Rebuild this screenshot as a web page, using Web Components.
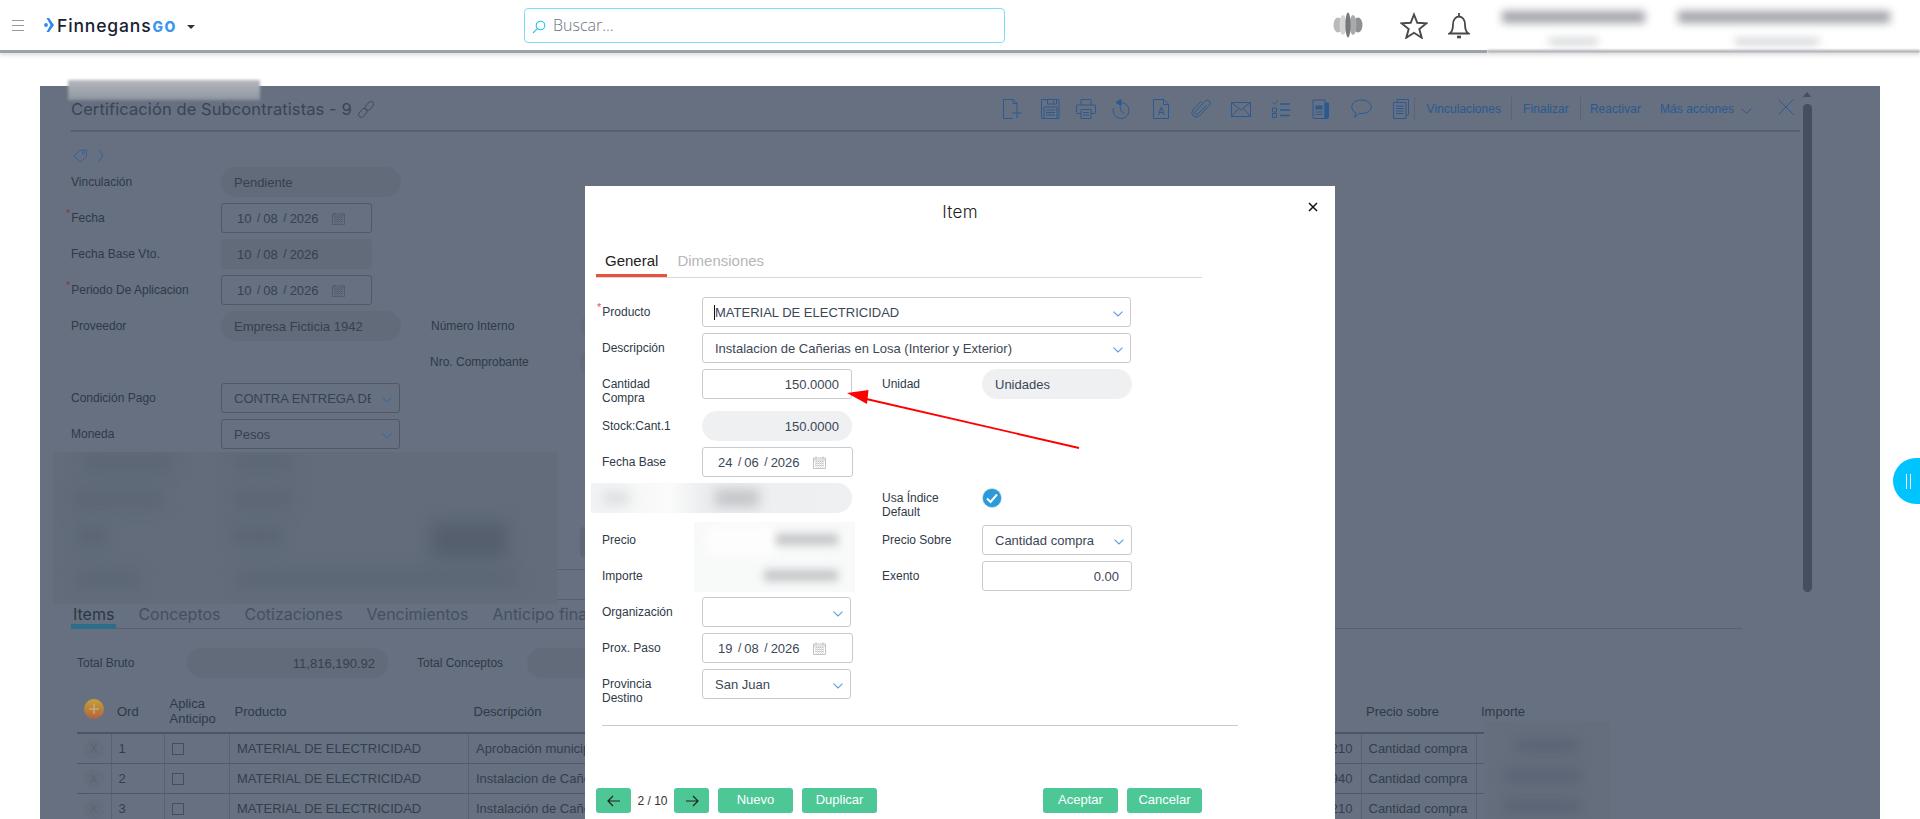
<!DOCTYPE html>
<html lang="es">
<head>
<meta charset="utf-8">
<title>Finnegans GO</title>
<style>
html, body { margin: 0; height: 100%; overflow: hidden; background: #fff; font-family: "Liberation Sans", Arial, sans-serif; }
</style>
</head>
<body>
<fin-app>
  <fin-topbar></fin-topbar>
  <fin-panel>
    <fin-header></fin-header>
    <fin-tagline></fin-tagline>

    <fin-line><fin-row col label="Vinculación"><fin-field kind="ro" value="Pendiente" style="width:180px"></fin-field></fin-row></fin-line>
    <fin-line><fin-row col req label="Fecha"><fin-field kind="date" value="10/08/2026" style="width:151px"></fin-field></fin-row></fin-line>
    <fin-line><fin-row col label="Fecha Base Vto."><fin-field kind="date" flat value="10/08/2026" style="width:151px"></fin-field></fin-row></fin-line>
    <fin-line><fin-row col req label="Periodo De Aplicacion"><fin-field kind="date" value="10/08/2026" style="width:151px"></fin-field></fin-row></fin-line>
    <fin-line>
      <fin-row col label="Proveedor"><fin-field kind="ro" value="Empresa Ficticia 1942" style="width:180px"></fin-field></fin-row>
      <fin-row label="Número Interno"><fin-field kind="ro" style="width:180px"></fin-field></fin-row>
    </fin-line>
    <fin-line>
      <fin-row col></fin-row>
      <fin-row label="Nro. Comprobante" style="margin-left:-1px"><fin-field kind="ro" style="width:180px"></fin-field></fin-row>
    </fin-line>
    <fin-line><fin-row col label="Condición Pago"><fin-field kind="select" value="CONTRA ENTREGA DE" style="width:179px"></fin-field></fin-row></fin-line>
    <fin-line><fin-row col label="Moneda"><fin-field kind="select" value="Pesos" style="width:179px"></fin-field></fin-row></fin-line>

    <fin-tabs style="margin-top:152px;width:1671px;--tabs-h:28px;--tab-h:28px;--tab-top:3px;--tab-bar-h:5px;--tab-pad:2px;--tab-gap:20px;--tab-bar:#2b6d8b;--tab-line:#556071;--tab-on:#2c3645;--tab-off:#454f5f;--tab-font:'Inter','Open Sans',sans-serif;--tab-size:16px">
      <fin-tab active>Items</fin-tab><fin-tab>Conceptos</fin-tab><fin-tab>Cotizaciones</fin-tab><fin-tab>Vencimientos</fin-tab><fin-tab>Anticipo fina</fin-tab>
    </fin-tabs>

    <fin-line style="margin:19px 0 12px 6px;--label-w:110px;--col-w:340px;--label-pad:0px">
      <fin-row col label="Total Bruto"><fin-field kind="ro" align="right" value="11,816,190.92" style="width:201px"></fin-field></fin-row>
      <fin-row label="Total Conceptos"><fin-field kind="ro" align="right" style="width:201px"></fin-field></fin-row>
    </fin-line>
    <fin-items></fin-items>
  </fin-panel>

  <!-- tapados en la captura original -->
  <fin-blur style="left:68px;top:80px;width:192px;height:20px;--fill:linear-gradient(#b4b7bd,#8f95a0);filter:blur(1.500px)"></fin-blur>
  <fin-blur style="left:53px;top:452px;width:504px;height:152px;--fill:#626c7b;--blob:#5a6473;--b:8px">
    <span style="left:30px;top:4px;width:90px;height:14px"></span>
    <span style="left:180px;top:4px;width:60px;height:12px"></span>
    <span style="left:20px;top:40px;width:90px;height:14px"></span>
    <span style="left:180px;top:40px;width:60px;height:14px"></span>
    <span style="left:24px;top:76px;width:30px;height:16px"></span>
    <span style="left:180px;top:76px;width:50px;height:16px"></span>
    <span style="left:378px;top:70px;width:76px;height:36px;background:#555f6e"></span>
    <span style="left:24px;top:120px;width:62px;height:12px"></span>
    <span style="left:184px;top:120px;width:280px;height:12px"></span>
  </fin-blur>
  <fin-blur style="left:557px;top:569px;width:28px;height:29px;--fill:transparent;border-top:1px solid #566070;border-bottom:1px solid #566070"></fin-blur>
  <fin-blur style="left:580px;top:527px;width:5px;height:30px;--fill:#5d6775;border-radius:4px 0 0 4px"></fin-blur>
  <fin-blur style="left:1484px;top:722px;width:126px;height:97px;--fill:#646e7d;--blob:#596373">
    <span style="left:32px;top:18px;width:62px;height:12px"></span>
    <span style="left:20px;top:48px;width:76px;height:12px"></span>
    <span style="left:20px;top:78px;width:76px;height:12px"></span>
  </fin-blur>

  <fin-modal>
    <fin-line><fin-row col req label="Producto"><fin-field kind="select" caret value="MATERIAL DE ELECTRICIDAD" style="width:429px"></fin-field></fin-row></fin-line>
    <fin-line><fin-row col label="Descripción"><fin-field kind="select" value="Instalacion de Cañerias en Losa (Interior y Exterior)" style="width:429px"></fin-field></fin-row></fin-line>
    <fin-line>
      <fin-row col label="Cantidad Compra"><fin-field align="right" value="150.0000" style="width:150px"></fin-field></fin-row>
      <fin-row label="Unidad"><fin-field kind="ro" value="Unidades" style="width:150px"></fin-field></fin-row>
    </fin-line>
    <fin-line><fin-row col label="Stock:Cant.1"><fin-field kind="ro" align="right" value="150.0000" style="width:150px"></fin-field></fin-row></fin-line>
    <fin-line><fin-row col label="Fecha Base"><fin-field kind="date" value="24/06/2026" style="width:151px"></fin-field></fin-row></fin-line>
    <fin-line>
      <fin-row col></fin-row>
      <fin-row label="Usa Índice Default"><fin-check></fin-check></fin-row>
    </fin-line>
    <fin-line>
      <fin-row col label="Precio"></fin-row>
      <fin-row label="Precio Sobre"><fin-field kind="select" value="Cantidad compra" style="width:150px"></fin-field></fin-row>
    </fin-line>
    <fin-line>
      <fin-row col label="Importe"></fin-row>
      <fin-row label="Exento"><fin-field align="right" value="0.00" style="width:150px"></fin-field></fin-row>
    </fin-line>
    <fin-line><fin-row col label="Organización"><fin-field kind="select" style="width:149px"></fin-field></fin-row></fin-line>
    <fin-line><fin-row col label="Prox. Paso"><fin-field kind="date" value="19/08/2026" style="width:151px"></fin-field></fin-row></fin-line>
    <fin-line><fin-row col label="Provincia Destino"><fin-field kind="select" value="San Juan" style="width:149px"></fin-field></fin-row></fin-line>
  </fin-modal>

  <fin-blur style="left:591px;top:483px;width:261px;height:30px;--fill:linear-gradient(90deg,#f2f3f4,#fbfbfb 30%,#eceef0 42%,#eef0f1);--blob:#c4c6c9;--b:6px;border-radius:0 15px 15px 0">
    <span style="left:124px;top:6px;width:44px;height:18px"></span>
    <span style="left:12px;top:8px;width:26px;height:14px;background:#dcdee0"></span>
  </fin-blur>
  <fin-blur style="left:694px;top:522px;width:161px;height:70px;--fill:#f8f9f9;--blob:#c2c4c7;--b:4px">
    <span style="left:12px;top:4px;width:70px;height:30px;background:#fdfdfd"></span>
    <span style="left:82px;top:12px;width:62px;height:11px"></span>
    <span style="left:70px;top:48px;width:74px;height:11px"></span>
  </fin-blur>

  <fin-arrow></fin-arrow>
  <fin-float></fin-float>
</fin-app>

<script>
//! Helper: every element clones its template into an open shadow root
function makeTemplate(html) {
    const t = document.createElement('template');
    t.innerHTML = html;
    return t;
}

class Base extends HTMLElement {
    constructor() {
        super();
        this.attachShadow({ mode: 'open' });
        this.shadowRoot.appendChild(this.constructor.template.content.cloneNode(true));
    }
}

//! APP
class FinApp extends Base {
    static template = makeTemplate(`
<style>
:host { display: block; position: relative; width: 100%; height: 100vh; overflow: hidden; background: #fff; }
</style>
<slot></slot>`);
}

//! TOP BAR
class FinTopbar extends Base {
    static template = makeTemplate(`
<style>
:host { display: flex; align-items: center; position: relative; box-sizing: content-box; height: 50px; background: #fff; border-bottom: 3px solid #9da1a8; box-shadow: 0 2px 4px rgba(0,0,0,.14); }
.burger { margin-left: 12px; width: 12px; height: 9px; border-top: 1px solid #999; border-bottom: 1px solid #999; position: relative; }
.burger::after { content: ""; position: absolute; left: 0; right: 0; top: 4px; border-top: 1px solid #999; }
.logo { display: flex; align-items: center; margin-left: 20px; width: 143px; }
.logo svg { margin-right: 3px; }
.name { font: 500 17.500px "Inter", sans-serif; color: #182232; letter-spacing: .85px; }
.go { font: 800 14px "Inter", sans-serif; color: #3a95f0; letter-spacing: 1.600px; margin-left: 1px; margin-top: 2px; }
.caret { flex: none; width: 0; height: 0; border: 4px solid transparent; border-top: 4px solid #333; border-bottom: 0; margin-top: 3px; }
.search { margin-left: 329px; box-sizing: border-box; width: 481px; height: 35px; border: 1px solid #7fdcf8; border-radius: 4px; display: flex; align-items: center; padding-left: 7px; font: 300 16px "Open Sans", sans-serif; color: #6b7280; }
.search svg { margin-right: 7px; margin-top: 3px; }
.brand { margin-left: 328px; }
.star { margin-left: 37px; }
.bell { margin-left: 20px; }
.who { position: absolute; left: 1487px; top: 0; right: 0; height: 53px; background: #fff; overflow: hidden; }
.who i { position: absolute; background: #a2a4a9; filter: blur(4px); }
.who b { position: absolute; left: 0; right: 0; top: 50px; height: 3px; background: #a9acb2; filter: blur(1px); }
</style>
<div class="burger"></div>
<div class="logo">
  <svg width="10" height="14" viewBox="0 0 10 14"><path d="M2.500 0H5l5 7-5 7H2.500L6.500 7z" fill="#2f86ee"/><circle cx="2" cy="7" r="1.900" fill="#2f86ee"/></svg>
  <span class="name">Finnegans</span><span class="go">GO</span>
</div>
<div class="caret"></div>
<div class="search">
  <svg width="14" height="14" viewBox="0 0 14 14" fill="none" stroke="#27c3ee" stroke-width="1.100"><circle cx="8.500" cy="5.500" r="4.300"/><path d="M5.300 8.700 1 13"/></svg>
  <span>Buscar...</span>
</div>
<svg class="brand" width="30" height="26" viewBox="0 0 30 26">
  <ellipse cx="5" cy="13" rx="4.500" ry="7.500" fill="#b9babc"/><ellipse cx="25" cy="13" rx="4.500" ry="7.500" fill="#8f9092"/>
  <ellipse cx="10" cy="13" rx="3.500" ry="10" fill="#d3d4d5"/><ellipse cx="20" cy="13" rx="3.500" ry="10" fill="#a8a9ab"/>
  <ellipse cx="15" cy="13" rx="2.600" ry="12.500" fill="#77787a"/>
</svg>
<svg class="star" width="28" height="27" viewBox="0 0 28 27"><path d="M14 2.500l3.300 8.300 9.200.5-7.200 5.700 2.400 8.700L14 20.800 6.300 25.700l2.400-8.700L1.500 11.300l9.200-.5z" fill="none" stroke="#484848" stroke-width="1.900" stroke-linejoin="miter"/></svg>
<svg class="bell" width="22" height="27" viewBox="0 0 22 27" fill="none" stroke="#484848" stroke-width="1.800"><path d="M1.500 21.500h19c-2.500-1.500-3.500-4-3.500-9 0-4.500-2.500-8-6-8s-6 3.500-6 8c0 5-1 7.500-3.500 9z"/><path d="M11 1v3.500"/><path d="M9 25h4" stroke-width="2.600"/></svg>
<div class="who">
  <i style="left:15px;top:11px;width:143px;height:12px"></i>
  <i style="left:191px;top:11px;width:212px;height:12px"></i>
  <i style="left:62px;top:39px;width:49px;height:5px;background:#c2c4c7"></i>
  <i style="left:248px;top:39px;width:84px;height:5px;background:#c2c4c7"></i>
  <b></b>
</div>`);
}

//! BACKGROUND PANEL (dimmed by the modal overlay)
class FinPanel extends Base {
    static template = makeTemplate(`
<style>
:host { display: block; position: relative; box-sizing: border-box; margin: 33px 40px 0; height: 733px; padding-left: 31px; background: #667080; overflow: hidden;
    --label-w: 150px; --col-w: 360px; --label-color: #2f3947; --star: #8f3346; --field-border: #4f5867; --field-color: #364050; --field-fill: #616b79; --chev: #3f6a9c; --cal: #4f5867; }
.scroll { position: absolute; left: 1763px; top: 18px; width: 9px; height: 488px; border-radius: 5px; background: #444e5d; }
.up { position: absolute; left: 1763px; top: 6px; width: 0; height: 0; border: 4px solid transparent; border-bottom: 5px solid #444e5d; border-top: 0; }
</style>
<slot></slot>
<div class="up"></div>
<div class="scroll"></div>`);
}

//! Toolbar with title of the document
class FinHeader extends Base {
    static template = makeTemplate(`
<style>
:host { display: flex; align-items: center; box-sizing: border-box; width: 1729px; height: 46px; padding-top: 2px; border-bottom: 2px solid #565f6e; color: #2a5a90; }
.title { font: 400 16.500px "Inter", sans-serif; color: #3a4453; letter-spacing: .09px; margin-right: 6px; }
.link { margin-right: auto; }
.ic { display: flex; justify-content: center; align-items: center; height: 22px; }
svg.t { display: block; }
.act { font: 12px "Liberation Sans", sans-serif; color: #2a5a90; white-space: nowrap; letter-spacing: .05px; }
.sep { width: 1px; height: 24px; background: #5a6473; }
.x { margin: 0 6px 4px 26px; }
</style>
<span class="title">Certificación de Subcontratistas - 9</span>
<svg class="link" width="16" height="17" viewBox="0 0 16 17" fill="none" stroke="#3f4958" stroke-width=".9"><rect x="8.500" y="-.5" width="5.500" height="10" rx="2.700" transform="rotate(40 11 5)"/><rect x="2" y="7" width="5.500" height="10" rx="2.700" transform="rotate(40 4.800 12)"/></svg>

<div class="ic" style="width:38px"><svg class="t" width="19" height="20" viewBox="0 0 19 20" fill="none" stroke="currentColor"><path d="M10 19.500H.500V.500H10l4 4V9M10 .500v4h4M14 9v10M9 14h9.500"/></svg></div>
<div class="ic" style="width:38px"><svg class="t" width="19" height="20" viewBox="0 0 19 20" fill="none" stroke="currentColor"><path d="M.5.500h17.500v19H.500zM6.500.500V5h9V.500M12.500 1.500V4M3 8h13v11.500H3zM5 11h9M5 13.500h9M5 16h9"/></svg></div>
<div class="ic" style="width:33px"><svg class="t" width="20" height="20" viewBox="0 0 20 20" fill="none" stroke="currentColor"><path d="M5 6V.500h10V6M5 14.500H1.500a1 1 0 0 1-1-1V7a1 1 0 0 1 1-1h17a1 1 0 0 1 1 1v6.500a1 1 0 0 1-1 1H15M5 10.500h10v9H5zM7 13.500h6M7 16h6"/></svg></div>
<div class="ic" style="width:38px"><svg class="t" width="20" height="20" viewBox="0 0 20 20" fill="none" stroke="currentColor"><path d="M7 3.800a8 8 0 1 1-5.500 5"/><path d="M9 .5 4 3.500 9 6.500z" fill="currentColor"/><path d="M8 7.500l1 4 3.500 3.500"/></svg></div>
<div class="ic" style="width:40px"><svg class="t" width="16" height="20" viewBox="0 0 16 20" fill="none" stroke="currentColor"><path d="M.5.500H11l4.500 4.500v14.500H.500zM10.500.500v5h5"/><text x="8" y="16" text-anchor="middle" font-family="Liberation Sans" font-size="10" fill="currentColor" stroke="none">A</text></svg></div>
<div class="ic" style="width:41px"><svg class="t" width="20" height="20" viewBox="0 0 20 20" fill="none" stroke="currentColor"><path d="M15.500 6 7 15a1.800 1.800 0 0 1-2.700-2.600L14 2.200a3 3 0 0 1 4.300 4.200L8 17.300a4.500 4.500 0 0 1-6.300-6.200L10.500 2"/></svg></div>
<div class="ic" style="width:38px"><svg class="t" width="20" height="15" viewBox="0 0 20 15" fill="none" stroke="currentColor"><path d="M.5.500h19v14H.500zM.5.500 10 8l9.500-7.500M.5 14.500 7.500 6.500M19.500 14.500l-7-8"/></svg></div>
<div class="ic" style="width:42px"><svg class="t" width="18" height="18" viewBox="0 0 18 18" fill="none" stroke="currentColor"><path d="M.5 2.500l2 2L6 .5M.5 8h4v4h-4zM.5 13.500h4v4h-4z"/><path d="M8 4h10M8 10h10M8 15.500h10" stroke-width="1.600"/></svg></div>
<div class="ic" style="width:38px"><svg class="t" width="17" height="20" viewBox="0 0 17 20" fill="none" stroke="currentColor"><path d="M13 4h3.500v14.500a1 1 0 0 1-1 1H13z" fill="currentColor"/><path d="M1 1h12v18.500H2a1 1 0 0 1-1-1z"/><path d="M3.500 6.500h7v4h-7z" fill="currentColor" stroke="none"/><path d="M3.500 13h7M3.500 15.500h7"/></svg></div>
<div class="ic" style="width:44px"><svg class="t" width="21" height="20" viewBox="0 0 21 20" fill="none" stroke="currentColor"><path d="M10.500 1C5 1 .8 4 .8 8c0 2.500 1.500 4.500 4 5.700L3.500 18.500l5-4.200c.6.100 1.300.200 2 .200 5.500 0 9.700-3 9.700-6.500S16 1 10.500 1z"/></svg></div>
<div class="ic" style="width:34px;margin-right:-4px"><svg class="t" width="16" height="20" viewBox="0 0 16 20" fill="none" stroke="currentColor"><path d="M4 3V.500h11.500V16H13"/><path d="M.5 3.500H13V19.500H.500zM3 7h7.500M3 9.500h7.500M3 12h7.500M3 14.500h7.500"/></svg></div>

<div class="sep"></div><span class="act" style="margin:0 10px 0 12px">Vinculaciones</span>
<div class="sep"></div><span class="act" style="margin:0 11px">Finalizar</span>
<div class="sep"></div><span class="act" style="margin:0 19px 0 9px">Reactivar</span>
<span class="act">Más acciones</span>
<svg style="margin-left:7px;margin-top:3px" width="11" height="6" viewBox="0 0 11 6" fill="none" stroke="currentColor"><path d="M.5.500l5 5 5-5"/></svg>
<svg class="x" width="16" height="16" viewBox="0 0 16 16" fill="none" stroke="currentColor"><path d="M.5.500l15 15M15.500.500l-15 15"/></svg>`);
}

class FinTagline extends Base {
    static template = makeTemplate(`
<style>
:host { display: flex; align-items: center; gap: 10px; height: 35px; padding: 12px 0 0 2px; box-sizing: border-box; color: #2f639d; }
</style>
<svg width="15" height="14" viewBox="0 0 15 14" fill="none" stroke="currentColor"><path d="M.8 7 6.500 1.500 13.500 1V7.500L7.500 13z"/><circle cx="10.500" cy="4" r="1"/></svg>
<svg width="6" height="13" viewBox="0 0 6 13" fill="none" stroke="currentColor"><path d="M.8.500l4 6-4 6"/></svg>`);
}

//! FORM PIECES
class FinLine extends Base {
    static template = makeTemplate(`
<style>
:host { display: flex; align-items: flex-start; margin-bottom: 6px; }
</style>
<slot></slot>`);
}

class FinRow extends Base {
    static template = makeTemplate(`
<style>
:host { display: flex; align-items: flex-start; min-height: 30px; font: 12px/14px "Liberation Sans", sans-serif; color: var(--label-color); }
:host([col]) { width: var(--col-w); flex: none; }
.label { box-sizing: border-box; flex: none; width: var(--label-w); padding: 8px var(--label-pad, 24px) 0 0; }
.star { color: var(--star); margin-left: -5px; margin-right: 1px; vertical-align: 5px; font-size: 11px; line-height: 0; }
</style>
<div class="label"><span class="star" hidden>*</span><span class="text"></span></div>
<slot></slot>`);
    connectedCallback() {
        this.shadowRoot.querySelector('.text').textContent = this.getAttribute('label') || '';
        this.shadowRoot.querySelector('.star').hidden = !this.hasAttribute('req');
    }
}

const CAL = `<svg class="cal" width="13" height="13" viewBox="0 0 13 13" fill="none" stroke="currentColor" stroke-width=".8"><path d="M.5 2h12v10.500H.500zM3 .500v2.500M10 .500v2.500M.5 4h12"/><path d="M2 6h9M2 8h9M2 10h9M3.500 5v6.500M5.500 5v6.500M7.500 5v6.500M9.500 5v6.500" stroke-dasharray="1 1"/></svg>`;
const CHEV = `<svg class="chev" width="10" height="6" viewBox="0 0 10 6" fill="none" stroke="currentColor" stroke-width="1.100"><path d="M.5.700 5 5 9.500.700"/></svg>`;

class FinField extends Base {
    static template = makeTemplate(`
<style>
:host { display: flex; align-items: center; position: relative; box-sizing: border-box; flex: none; height: 30px; padding: 0 12px 0 12px; border: 1px solid var(--field-border); border-radius: 3px; font: 13px "Liberation Sans", sans-serif; color: var(--field-color); white-space: nowrap; }
:host([kind="ro"]) { border-color: transparent; background: var(--field-fill); border-radius: 15px; padding: 0 12px; }
:host([align="right"]) { justify-content: flex-end; }
:host([kind="date"]) { padding-left: 15px; }
:host([kind="date"][flat]) { border-color: transparent; background: var(--field-fill); border-radius: 4px; }
:host([caret]) .val { border-left: 1px solid #111; margin-left: -1px; }
.val { overflow: hidden; flex: 1; }
:host([align="right"]) .val { flex: none; }
.d { display: flex; }
.d i { font-style: normal; font-size: 12px; margin: 0 3px 0 5.500px; }
.cal { color: var(--cal); margin-left: 13px; }
:host([flat]) .cal { display: none; }
.chev { color: var(--chev); position: absolute; right: 7px; top: 13px; }
</style>
<span class="val"></span>`);
    connectedCallback() {
        const kind = this.getAttribute('kind');
        const value = this.getAttribute('value') || '';
        const val = this.shadowRoot.querySelector('.val');
        if (kind === 'date') {
            const [d, m, y] = value.split('/');
            val.innerHTML = `<span class="d"><span>${d}</span><i>/</i><span>${m}</span><i>/</i><span>${y}</span></span>`;
            val.style.flex = 'none';
            val.insertAdjacentHTML('afterend', CAL);
        } else {
            val.textContent = value;
        }
        if (kind === 'select') {
            val.style.marginRight = '16px';
            val.insertAdjacentHTML('afterend', CHEV);
        }
    }
}

class FinCheck extends Base {
    static template = makeTemplate(`
<style>
:host { display: block; margin: 5px 0 0 0; width: 20px; height: 20px; }
</style>
<svg width="20" height="20" viewBox="0 0 20 20"><circle cx="10" cy="10" r="9.500" fill="#2a9ad8" stroke="#cfe3ef" stroke-width=".6"/><path d="M5 10.500l3.500 3.500L15 6.500" fill="none" stroke="#fff" stroke-width="2"/></svg>`);
}

//! TABS
class FinTabs extends Base {
    static template = makeTemplate(`
<style>
:host { display: flex; align-items: flex-start; gap: var(--tab-gap); box-sizing: border-box; height: var(--tabs-h); border-bottom: 1px solid var(--tab-line); }
</style>
<slot></slot>`);
}

class FinTab extends Base {
    static template = makeTemplate(`
<style>
:host { display: flex; align-items: center; box-sizing: border-box; height: var(--tab-h); padding: var(--tab-top) var(--tab-pad) var(--tab-bar-h); white-space: nowrap; font: var(--tab-size) var(--tab-font); color: var(--tab-off); }
:host([active]) { color: var(--tab-on); border-bottom: var(--tab-bar-h) solid var(--tab-bar); padding-bottom: 0; }
</style>
<slot></slot>`);
}

//! ITEMS TABLE
const ITEMS = [
    ['1', 'MATERIAL DE ELECTRICIDAD', 'Aprobación municipal', '78,775.9210'],
    ['2', 'MATERIAL DE ELECTRICIDAD', 'Instalacion de Cañerias en Losa', '78,775.9940'],
    ['3', 'MATERIAL DE ELECTRICIDAD', 'Instalación de Cañerias', '78,775.9210'],
];

class FinItems extends Base {
    static template = makeTemplate(`
<style>
:host { display: block; margin-left: 6px; width: 1533px; font: 13px "Liberation Sans", sans-serif; color: #343e4c; }
table { border-collapse: collapse; table-layout: fixed; width: 1533px; }
th { font-weight: 400; text-align: left; height: 42px; padding: 0 0 0 5px; line-height: 15px; border-bottom: 2px solid #4b5564; color: #2f3947; }
td { height: 29px; padding: 0 0 0 7px; border-bottom: 1px solid #4f5968; border-left: 1px solid #586272; white-space: nowrap; overflow: hidden; }
td:first-child { border-left: 0; padding: 0; }
td.num { text-align: right; padding-right: 8px; }
.add { display: block; margin: 0 0 4px 7px; }
.del { display: block; width: 20px; height: 20px; margin: 0 auto; border-radius: 50%; background: #636d7c; color: #5a6473; text-align: center; line-height: 20px; font-size: 12px; }
.box { display: block; width: 10px; height: 10px; border: 1px solid #444e5c; }
</style>
<table>
  <colgroup><col style="width:34px"><col style="width:53.500px"><col style="width:65px"><col style="width:239px"><col style="width:620.500px"><col style="width:272px"><col style="width:115px"><col></colgroup>
  <thead><tr>
    <th style="padding:0"><svg class="add" width="20" height="20" viewBox="0 0 20 20"><defs><linearGradient id="g" x1="0" y1="0" x2="0" y2="1"><stop offset="0" stop-color="#c3a238"/><stop offset="1" stop-color="#b3623f"/></linearGradient></defs><circle cx="10" cy="10" r="10" fill="url(#g)"/><path d="M10 5v10M5 10h10" stroke="#c9a878" stroke-width="1.500"/></svg></th>
    <th style="padding-left:6px">Ord</th><th>Aplica Anticipo</th><th>Producto</th><th>Descripción</th><th></th><th>Precio sobre</th><th>Importe</th>
  </tr></thead>
  <tbody></tbody>
</table>`);
    connectedCallback() {
        this.shadowRoot.querySelector('tbody').innerHTML = ITEMS.map(r => `<tr>
            <td><span class="del">X</span></td><td>${r[0]}</td><td><span class="box"></span></td>
            <td>${r[1]}</td><td>${r[2]}</td><td class="num">${r[3]}</td><td>Cantidad compra</td><td></td></tr>`).join('');
    }
}

//! MODAL
class FinModal extends Base {
    static template = makeTemplate(`
<style>
:host { position: absolute; left: 585px; top: 186px; bottom: 0; width: 750px; box-sizing: border-box; background: #fff; display: flex; flex-direction: column;
    --label-w: 100px; --col-w: 280px; --label-color: #2f3a48; --star: #e8505b; --field-border: #c9cacc; --field-color: #3c4757; --field-fill: #eef0f2; --chev: #5b9bdc; --cal: #b3b6ba; }
.title { height: 52px; text-align: center; font: 300 17px/53px "Inter", sans-serif; color: #222; letter-spacing: .3px; }
.close { position: absolute; left: 723px; top: 16px; }
fin-tabs { margin: 0 0 19px 11px; width: 606px; --tabs-h: 40px; --tab-h: 39px; --tab-top: 9px; --tab-bar-h: 3px; --tab-pad: 9px; --tab-gap: 1px; --tab-bar: #e9523a; --tab-line: #d8d8d8; --tab-on: #222; --tab-off: #b5b7ba; --tab-font: "Liberation Sans", sans-serif; --tab-size: 15px; }
.body { padding-left: 17px; }
hr { margin: 14px 0 62px 17px; width: 636px; height: 1px; border: 0; background: #c9cacc; }
.foot { display: flex; align-items: center; padding-left: 11px; }
.count { width: 43px; text-align: center; font: 12px "Liberation Sans", sans-serif; color: #333; }
.ml { margin-left: 9px; }
</style>
<div class="title">Item</div>
<svg class="close" width="10" height="10" viewBox="0 0 10 10" fill="none" stroke="#111" stroke-width="1.500"><path d="M1 1l8 8M9 1 1 9"/></svg>
<fin-tabs><fin-tab active>General</fin-tab><fin-tab>Dimensiones</fin-tab></fin-tabs>
<div class="body"><slot></slot></div>
<hr>
<div class="foot">
  <fin-button narrow><svg width="14" height="12" viewBox="0 0 14 12" fill="none" stroke="#222" stroke-width="1.200"><path d="M13 6H1M6 1 1 6l5 5"/></svg></fin-button>
  <span class="count">2 / 10</span>
  <fin-button narrow><svg width="14" height="12" viewBox="0 0 14 12" fill="none" stroke="#222" stroke-width="1.200"><path d="M1 6h12M8 1l5 5-5 5"/></svg></fin-button>
  <fin-button class="ml">Nuevo</fin-button>
  <fin-button class="ml">Duplicar</fin-button>
  <fin-button style="margin-left:166px">Aceptar</fin-button>
  <fin-button class="ml">Cancelar</fin-button>
</div>`);
}

class FinButton extends Base {
    static template = makeTemplate(`
<style>
:host { display: flex; align-items: center; justify-content: center; box-sizing: border-box; width: 75px; height: 25px; padding-bottom: 2px; background: #4dc795; border-radius: 3px; color: #fff; font: 13px "Liberation Sans", sans-serif; }
:host([narrow]) { width: 35px; padding-bottom: 0; }
</style>
<slot></slot>`);
}

//! OVERLAYS
class FinBlur extends Base {
    static template = makeTemplate(`
<style>
:host { position: absolute; display: block; overflow: hidden; background: var(--fill); }
::slotted(span) { position: absolute; background: var(--blob); filter: blur(var(--b, 6px)); }
</style>
<slot></slot>`);
}

class FinArrow extends Base {
    static template = makeTemplate(`
<style>
:host { position: absolute; left: 840px; top: 385px; display: block; width: 245px; height: 70px; }
svg { display: block; }
</style>
<svg width="245" height="70" viewBox="840 385 245 70"><path d="M1079 448 862 398" stroke="#f00" stroke-width="1.800" fill="none"/><path d="M847 393 868.500 390 867 404z" fill="#f00"/></svg>`);
}

class FinFloat extends Base {
    static template = makeTemplate(`
<style>
:host { position: absolute; left: 1893px; top: 458px; display: flex; gap: 3px; align-items: center; box-sizing: border-box; width: 50px; height: 46px; padding-left: 13px; border-radius: 23px; background: #00c4ff; }
i { display: block; width: 1px; height: 15px; background: #fff; }
</style>
<i></i><i></i>`);
}

//! Registering the custom elements
customElements.define('fin-app', FinApp);
customElements.define('fin-topbar', FinTopbar);
customElements.define('fin-panel', FinPanel);
customElements.define('fin-header', FinHeader);
customElements.define('fin-tagline', FinTagline);
customElements.define('fin-line', FinLine);
customElements.define('fin-row', FinRow);
customElements.define('fin-field', FinField);
customElements.define('fin-check', FinCheck);
customElements.define('fin-tabs', FinTabs);
customElements.define('fin-tab', FinTab);
customElements.define('fin-items', FinItems);
customElements.define('fin-modal', FinModal);
customElements.define('fin-button', FinButton);
customElements.define('fin-blur', FinBlur);
customElements.define('fin-arrow', FinArrow);
customElements.define('fin-float', FinFloat);
</script>
</body>
</html>
